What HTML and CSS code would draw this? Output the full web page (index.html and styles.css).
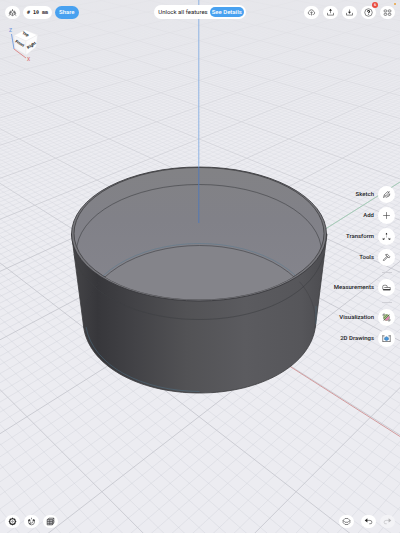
FILE: index.html
```html
<!DOCTYPE html>
<html lang="en">
<head>
<meta charset="utf-8">
<title>3D Modeling</title>
<link rel="stylesheet" href="styles.css">
</head>
<body>
<div class="app">
  <svg class="scene" viewBox="0 0 400 533" preserveAspectRatio="xMidYMid slice" aria-hidden="true">
    <defs>
      <linearGradient id="body" gradientUnits="userSpaceOnUse" x1="72" y1="0" x2="327" y2="0">
        <stop offset="0" stop-color="#454548"/><stop offset=".1" stop-color="#37373b"/>
        <stop offset=".24" stop-color="#424246"/><stop offset=".45" stop-color="#525255"/>
        <stop offset=".68" stop-color="#5b5b5f"/><stop offset=".9" stop-color="#56565a"/><stop offset="1" stop-color="#4b4b4f"/>
      </linearGradient>
      <linearGradient id="inside" x1="0" y1="0" x2="0" y2="1">
        <stop offset="0" stop-color="#828285"/><stop offset=".4" stop-color="#818188"/><stop offset="1" stop-color="#85858d"/>
      </linearGradient>
      <linearGradient id="haze" x1="0" y1="0" x2="0" y2="1">
        <stop offset="0" stop-color="#e9e9ed" stop-opacity=".85"/><stop offset="1" stop-color="#ececf1" stop-opacity="0"/>
      </linearGradient>
      <clipPath id="rimClip"><ellipse cx="199" cy="233.5" rx="125" ry="66"/></clipPath>
      <clipPath id="frontClip"><path d="M71 240A128 67.500 0 0 0 327 240V400H71Z"/></clipPath>
    </defs>
    <path id="minor" class="minor"/>
    <path id="major" class="major"/>
    <rect width="400" height="260" fill="url(#haze)"/>
    <path class="axis-x" d="M199 308.500L400 436.500"/>
    <path class="axis-y" d="M199 308.500L400 182"/>
    <path class="body" d="M71.500 234L83.500 326C88 365 138 393 199.500 393S311 365 315.500 326L327 234Z" fill="url(#body)"/>
    <ellipse class="rim" cx="199" cy="234" rx="127.500" ry="67"/>
    <ellipse cx="199" cy="233.500" rx="125" ry="66" fill="url(#inside)" class="edge"/>
    <g clip-path="url(#rimClip)">
      <ellipse class="seam" cx="199" cy="252" rx="122.500" ry="67.500"/>
      <ellipse cx="199.500" cy="318.500" rx="115" ry="73" fill="#84848a"/>
      <ellipse class="blue-edge" cx="199.500" cy="316.500" rx="116" ry="73"/>
      <ellipse class="seam" cx="199.500" cy="318.500" rx="115" ry="73"/>
    </g>
    <g clip-path="url(#frontClip)">
      <path class="seam" d="M74 254C83 293 136 319.500 199 319.500S315 293 324 254"/>
      <path class="seam faint" d="M106 275C90 290 82 307 84 328M293 275C309 290 317 307 315 328"/>
      <path class="blue-edge" d="M86 327C93 366 142 391 199.500 391.500"/>
    </g>
    <path class="blue-edge" d="M316 306V324"/>
    <path class="axis-z" d="M198.800 0V167"/>
    <path class="axis-z deep" d="M198.800 167V223"/>
  </svg>

  <header class="bar">
    <div class="group start">
      <button class="icon-btn" aria-label="Modeling space"><svg viewBox="0 0 12 12"><path d="M6 1.500V4M6 3.500L9 5.500V8.500L6 10.200L3 8.500V5.500ZM3 5.500L6 7L9 5.500M6 7V10M1 10L3 8.500M11 10L9 8.500M1.500 8L3.500 3.500M10.500 8L8.500 3.500"/></svg></button>
      <button class="unit"># 10 mm</button>
      <button class="share">Share</button>
    </div>
    <div class="promo">Unlock all features <button>See Details</button></div>
    <div class="group end">
      <button class="icon-btn" aria-label="Cloud sync"><svg viewBox="0 0 12 12"><path d="M4.500 8.500H3A2 2 0 0 1 2.800 4.800A3.200 3.200 0 0 1 9 4.800A2 2 0 0 1 9 8.500H7.500M6 10V5M4.500 6.500L6 5L7.500 6.500"/></svg></button>
      <button class="icon-btn" aria-label="Export"><svg viewBox="0 0 12 12"><path d="M2 6.500V9.500H10V6.500M6 7V2"/><path class="solid" d="M4 3.500L6 1L8 3.500Z"/></svg></button>
      <button class="icon-btn" aria-label="Import"><svg viewBox="0 0 12 12"><path d="M2 6.500V9.500H10V6.500M6 2V6"/><path class="solid" d="M4 5L6 7.800L8 5Z"/></svg></button>
      <button class="icon-btn" aria-label="Help"><svg viewBox="0 0 12 12"><circle cx="6" cy="6" r="5"/><path class="bold" d="M4.500 4.800C4.600 2.900 7.600 3 7.500 4.700C7.400 5.700 6 5.700 6 7M6 8.200V9"/></svg><span class="badge">6</span></button>
      <button class="icon-btn" aria-label="Apps"><svg viewBox="0 0 12 12"><rect x="1.500" y="2.500" width="3.500" height="2.800" rx="1"/><rect x="7" y="2.500" width="3.500" height="2.800" rx="1"/><rect x="1.500" y="7" width="3.500" height="2.800" rx="1"/><rect x="7" y="7" width="3.500" height="2.800" rx="1"/></svg><span class="dot"></span></button>
    </div>
  </header>

  <main>
    <button class="cube" aria-label="View orientation">
      <svg viewBox="0 0 32 38">
        <path d="M3.500 10L6 25" stroke="#7da3e0"/><path d="M6 25L18 34" stroke="#dc8b8b"/>
        <g class="sides"><path d="M6 11.500L17 6L29.500 11L18 17Z" fill="#fff"/><path d="M6 11.500L18 17V31L7 24Z" fill="#f6f6f8"/><path d="M29.500 11L18 17V31L28 23Z" fill="#fcfcfd"/></g>
        <text x="1" y="8" fill="#6f96dc">Z</text><text x="19" y="37" fill="#dc7979">X</text>
        <g class="face"><text transform="translate(14 10) rotate(22)">Top</text><text transform="translate(7 18) rotate(31)">Front</text><text transform="translate(20 25) rotate(-32)">Right</text></g>
      </svg>
    </button>
    <nav class="tools" aria-label="Tools">
      <button><span>Sketch</span><i><svg viewBox="0 0 12 12"><path d="M2 10L3 6.500L7.500 2L9 3.500L4.500 8.500ZM3 6.500L5 8M5 10L9.500 8L10.500 5L7 8M10 1.500L8 4"/></svg></i></button>
      <button><span>Add</span><i><svg viewBox="0 0 12 12"><path d="M6 1.500V10.500M1.500 6H10.500"/></svg></i></button>
      <button><span>Transform</span><i><svg viewBox="0 0 12 12"><path d="M6 2V4.500M4 8L2 9.500M8 8L10 9.500M6 6V7"/><path class="solid" d="M4.700 3L6 1L7.300 3ZM1 7.500V10.200H3.600ZM11 7.500V10.200H8.400Z"/></svg></i></button>
      <button><span>Tools</span><i><svg viewBox="0 0 12 12"><path d="M1.500 9.500L6.500 4.500L7.500 5.500L2.500 10.500ZM4.500 2.500L7 1.500L10.500 5L9.500 6.500L8 5.500L6.500 4.500L6 3Z"/></svg></i></button>
      <hr>
      <button><span>Measurements</span><i><svg viewBox="0 0 12 12"><path d="M1 8V4.500Q1 3 3 3H5Q7 3 7 5V6H11V9H2.500Q1 9 1 8ZM3 6H7"/><path class="bold" d="M1.500 9H11"/></svg></i></button>
      <hr>
      <button><span>Visualization</span><i><svg viewBox="0 0 12 12"><circle cx="6" cy="6" r="4" fill="#b5d88f" stroke="#5c7a4c"/><path d="M3.500 9.500L9.500 3.500L10 7L7 10Z" fill="#e07fb6" stroke="none"/><path d="M2 10L10 2M2.500 7L7 2.500M1.500 4V1.500H4M10.500 8V10.500H8"/></svg></i></button>
      <button><span>2D Drawings</span><i><svg viewBox="0 0 12 12"><path d="M1 1.500V10.500M11 1.500V10.500M1 2.500H3.500M11 2.500H8.500M1 10H11"/><path d="M3.500 5L6 3.500L8.500 5V7.500L6 8.800L3.500 7.500Z" fill="#4696dc" stroke="#3c75a8"/></svg></i></button>
    </nav>
  </main>

  <footer class="bar">
    <div class="group">
      <button class="icon-btn" aria-label="Settings"><svg viewBox="0 0 12 12"><circle class="bold" cx="6" cy="6" r="3.800"/><circle cx="6" cy="6" r="1"/><path class="bold" d="M6 1V2.500M6 9.500V11M1 6H2.500M9.500 6H11M2.500 2.500L3.500 3.500M8.500 8.500L9.500 9.500M9.500 2.500L8.500 3.500M3.500 8.500L2.500 9.500"/></svg></button>
      <button class="icon-btn" aria-label="Snapping"><svg viewBox="0 0 12 12"><path d="M2 4L4 3.500V6.500Q4.200 8 6 8T8 6.500V3.500L10 4V7Q9.500 10.500 6 10.500T2 7ZM6 1V3"/><path class="bold" d="M2 4.500L4 4M10 4.500L8 4M3 8.500L5 9.500"/></svg></button>
      <button class="icon-btn" aria-label="Section view"><svg viewBox="0 0 12 12"><path fill="#c4c4c7" d="M1.500 3.500L4 1.500H10.500V8L8.500 10.500H1.500Z"/><path d="M1.500 3.500H8.500V10.500M8.500 3.500L10.500 1.500M1.500 6H8.500L10.500 4M1.500 8.500H8.500L10.500 6M5 3.500V10.500"/></svg></button>
    </div>
    <div class="group end">
      <button class="icon-btn layers" aria-label="Items"><svg viewBox="0 0 12 12"><path d="M1.500 4.500L4 2H8L10.500 4.500L8 7H4ZM1.500 7.500L4 10H8L10.500 7.500M1.500 4.500V7.500M10.500 4.500V7.500"/></svg></button>
      <button class="icon-btn" aria-label="Undo"><svg viewBox="0 0 12 12"><path d="M3 4.500H8Q10.500 4.500 10.500 7T8 9H7"/><path class="solid" d="M1 4.500L4.500 1.800V7.200Z"/></svg></button>
      <button class="icon-btn disabled" aria-label="Redo" disabled><svg viewBox="0 0 12 12"><path d="M9 4.500H4Q1.500 4.500 1.500 7T4 9H5"/><path class="solid" d="M11 4.500L7.500 1.800V7.200Z"/></svg></button>
    </div>
  </footer>
</div>
<script src="grid.js"></script>
</body>
</html>
```
FILE: styles.css
```css
* { box-sizing: border-box; }
body {
  margin: 0;
  background: #ececf1;
  color: #1c1c1e;
  font: 500 6px/8px Roboto, "Liberation Sans", sans-serif;
}
button {
  border: 0;
  padding: 0;
  margin: 0;
  background: none;
  color: inherit;
  font: inherit;
}
.app {
  position: relative;
  display: flex;
  flex-direction: column;
  min-height: 100vh;
  overflow: hidden;
}
.icon-btn svg, .tools svg {
  display: block;
  width: 9px;
  height: 9px;
  fill: none;
  stroke: #3a3a3c;
  stroke-width: .8;
}
svg .solid { fill: #222; stroke: none; }
svg .bold { stroke: #222; stroke-width: 1.4; }

.scene {
  position: absolute;
  inset: 0;
  width: 100%;
  height: 100%;
}
.minor { fill: none; stroke: #cdced6; stroke-width: .5; opacity: .75; }
.major { fill: none; stroke: #c3c4cc; stroke-width: .8; }
.axis-x { stroke: #d39b9d; }
.axis-y { stroke: #a6cdb8; }
.axis-z { stroke: #8db3e3; }
.deep { stroke: #5479b4; }
.body { stroke: #3b3b3e; stroke-width: .8; }
.rim { fill: #77777c; stroke: #343437; stroke-width: .8; }
.edge { stroke: #3d3d40; stroke-width: .8; }
.seam { fill: none; stroke: #3e3f43; stroke-width: .6; }
.faint { opacity: .7; }
.blue-edge { fill: none; stroke: #4f7890; stroke-width: .7; opacity: .6; }

.bar {
  position: relative;
  display: flex;
  align-items: center;
  justify-content: space-between;
  padding: 5px;
}
.group {
  display: flex;
  flex: 1;
  align-items: center;
  gap: 4px;
}
.start { gap: 3px; }
.end { justify-content: flex-end; }
.icon-btn {
  position: relative;
  display: grid;
  place-items: center;
  width: 15px;
  height: 13px;
  border-radius: 7px;
  background: #fff;
}
.unit {
  height: 13px;
  padding: 0 4px;
  border-radius: 7px;
  background: #fff;
  font: 700 5px/13px "DejaVu Sans Mono", monospace;
}
.share {
  height: 13px;
  padding: 0 4px;
  border-radius: 7px;
  background: #48a1f0;
  color: #fff;
}
.promo {
  display: flex;
  align-items: center;
  gap: 2px;
  height: 14px;
  padding: 0 2px 0 4px;
  border-radius: 7px;
  background: #fff;
  white-space: nowrap;
  font-weight: 400;
}
.promo button {
  height: 10px;
  padding: 0 2px;
  border-radius: 5px;
  background: #48a1f0;
  color: #fff;
  font-weight: 500;
}
.badge {
  position: absolute;
  top: -4px;
  right: -2px;
  width: 6px;
  height: 6px;
  border-radius: 3px;
  background: #e94b3e;
  color: #fff;
  font-size: 4px;
  line-height: 6px;
  text-align: center;
}
.dot {
  position: absolute;
  top: -3px;
  right: -1px;
  width: 2px;
  height: 2px;
  border-radius: 1px;
  background: #e8a23c;
}
main {
  position: relative;
  display: flex;
  flex: 1;
  align-items: center;
  justify-content: space-between;
  padding: 0 5px 2px 8px;
}
.cube { align-self: flex-start; }
.cube svg { display: block; width: 32px; height: 38px; }
.sides { stroke: #e8e8ec; stroke-width: .4; }
.cube text { font-size: 5px; }
.cube .face text { font-size: 4px; font-weight: 900; fill: #333; }
.tools {
  display: flex;
  flex-direction: column;
  align-items: flex-end;
  gap: 4px;
}
.tools button {
  display: flex;
  align-items: center;
  gap: 4px;
}
.tools i {
  display: grid;
  place-items: center;
  width: 17px;
  height: 17px;
  border-radius: 50%;
  background: #fff;
}
.tools hr {
  width: 10px;
  height: 1px;
  margin: 2px 3px;
  border: 0;
  background: #cfcfd5;
}
.layers { margin-right: 3px; }
.icon-btn.disabled { background: #f3f3f6; }
.disabled svg { opacity: .3; }
```
FILE: grid.js
```js
// Perspective ground grid: one major cell is one unit, ten minor cells each.
const horizon = -165, depth = 473.5, spread = 70, falloff = 0.093;
function project(x, y) {
  const w = 1 - falloff * (x + y);
  return (199 + spread * (x - y) / w).toFixed(2) + " " + (horizon + depth / w).toFixed(2);
}
function lines(step, far) {
  let d = "";
  for (let n = Math.round(-far / step); n <= 9 / step; n++) {
    const v = n * step;
    if (step < 1 && n % 10 === 0) continue;
    d += "M" + project(v, -60) + "L" + project(v, 7 - v);
    d += "M" + project(-60, v) + "L" + project(7 - v, v);
  }
  return d;
}
document.getElementById("minor").setAttribute("d", lines(0.1, 18));
document.getElementById("major").setAttribute("d", lines(1, 30));
```
